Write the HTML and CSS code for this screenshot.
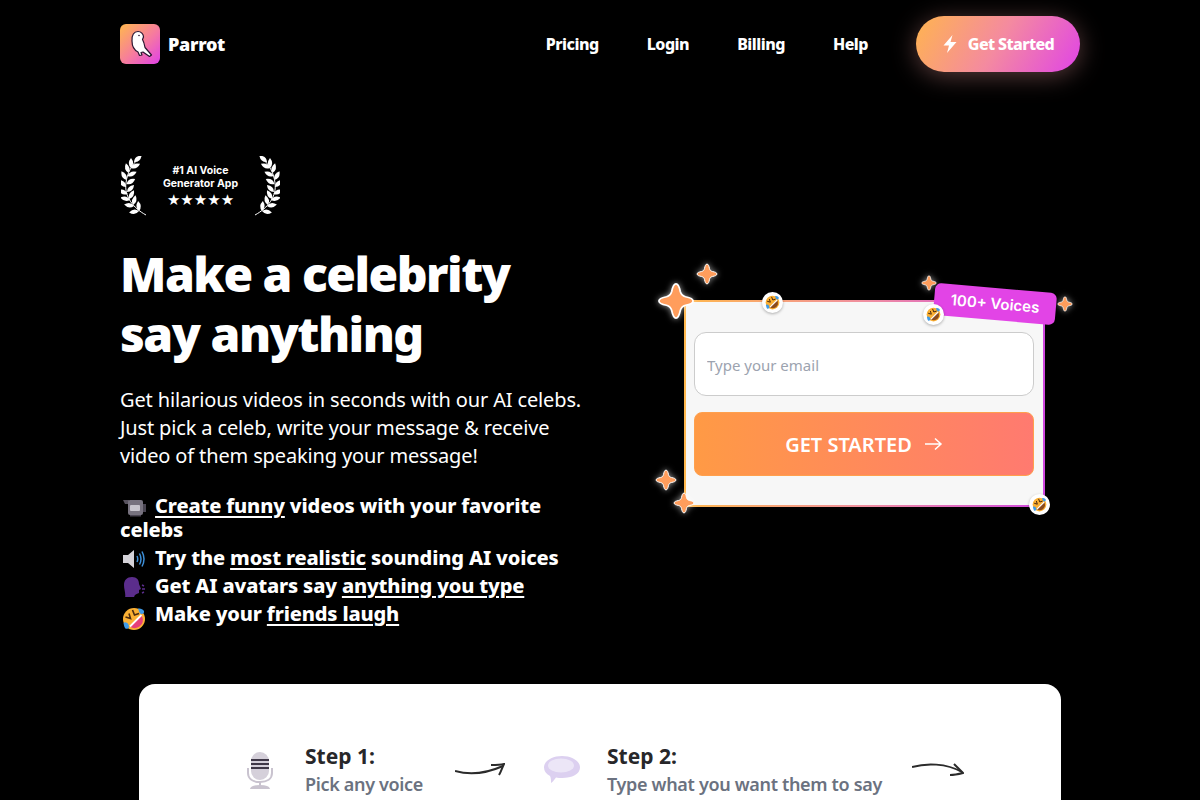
FILE: index.html
```html
<!DOCTYPE html>
<html lang="en">
<head>
    <meta charset="UTF-8">
    <meta name="viewport" content="width=device-width, initial-scale=1.0">
    <title>Parrot</title>
    <link rel="stylesheet" href="styles.css">
</head>
<body>
    <svg class="defs" width="0" height="0">
        <defs>
            <path id="leaf" d="M0 0 Q4.500 -4.400 10 0 Q4.500 4.400 0 0Z"/>
            <symbol id="laurel" viewBox="0 0 26 60">
                <path d="M25 59 C12 52 3 40 5 27 C6 17 11 9 17 3" fill="none" stroke="#fff" stroke-width="1"/>
                <g fill="#fff">
                    <use href="#leaf" transform="translate(18 55) rotate(172)"/>
                    <use href="#leaf" transform="translate(13 50) rotate(188)"/>
                    <use href="#leaf" transform="translate(9 44) rotate(195)"/>
                    <use href="#leaf" transform="translate(6.500 38) rotate(205)"/>
                    <use href="#leaf" transform="translate(5 31) rotate(225)"/>
                    <use href="#leaf" transform="translate(5.500 24) rotate(240)"/>
                    <use href="#leaf" transform="translate(7.500 17) rotate(255)"/>
                    <use href="#leaf" transform="translate(10 12) rotate(270)"/>
                    <use href="#leaf" transform="translate(18 55) rotate(-95)"/>
                    <use href="#leaf" transform="translate(12 49) rotate(-75)"/>
                    <use href="#leaf" transform="translate(8 43) rotate(-60)"/>
                    <use href="#leaf" transform="translate(6 36) rotate(-45)"/>
                    <use href="#leaf" transform="translate(5.500 28) rotate(-30)"/>
                    <use href="#leaf" transform="translate(6.500 20) rotate(-25)"/>
                    <use href="#leaf" transform="translate(10 12) rotate(-25)"/>
                    <use href="#leaf" transform="translate(13 6) rotate(-40)"/>
                </g>
            </symbol>
            <symbol id="sparkle" viewBox="0 0 40 40">
                <path d="M20 2 C22.500 2 23.500 5 24.500 10 C25.500 13.500 26.500 14.500 30 15.500 C35 16.500 38 17.500 38 20 C38 22.500 35 23.500 30 24.500 C26.500 25.500 25.500 26.500 24.500 30 C23.500 35 22.500 38 20 38 C17.500 38 16.500 35 15.500 30 C14.500 26.500 13.500 25.500 10 24.500 C5 23.500 2 22.500 2 20 C2 17.500 5 16.500 10 15.500 C13.500 14.500 14.500 13.500 15.500 10 C16.500 5 17.500 2 20 2Z" fill="#ff9d5c" stroke="#fff" stroke-width="1.800"/>
            </symbol>
            <symbol id="rofl" viewBox="0 0 24 24">
                <circle cx="12" cy="12" r="11" fill="#fbb034"/>
                <path d="M8 19.500 L19.500 8 Q23 15.500 17.500 19.500 Q12 23 8 19.500Z" fill="currentColor"/>
                <path d="M8 19.500 L19.500 8" fill="none" stroke="#fff" stroke-width="1.800"/>
                <path d="M3.500 10 L8.500 11.500 L7 6.500" fill="none" stroke="#4a2a10" stroke-width="1.600"/>
                <path d="M10.500 3 L12.500 8 L17 6.500" fill="none" stroke="#4a2a10" stroke-width="1.600"/>
                <path d="M1.500 16 C4 14 7 17 7 19.500 C7 22 4 22.500 3 21 C2 19.500 2 18 1.500 16Z" fill="#3f9be8"/>
                <path d="M16 1.500 C18 1.500 21 2 22 4 C22.500 6 21 7.500 19 7 C17 6 17 3.500 16 1.500Z" fill="#3f9be8"/>
            </symbol>
        </defs>
    </svg>

    <div class="wrap">
        <header class="top">
            <a class="brand">
                <span class="brand_logo">
                    <svg width="40" height="40" viewBox="0 0 40 40">
                        <path d="M12 17 C11.500 11 14 7.500 18 7.500 C21 7.500 23.500 10 23.500 13 L22.500 15.500 C24 18 24.500 21 25 23.500 L31.500 31 L29.500 32.500 L23 28 L21 28.500 L22 31 L19.500 31.500 L18 28 C14 26 12 22 12 17Z" fill="#fff" stroke="#2a1430" stroke-width="1.200" stroke-linejoin="round"/>
                        <circle cx="19" cy="11.500" r="0.800" fill="#2a1430"/>
                    </svg>
                </span>
                <span class="brand_name">Parrot</span>
            </a>
            <nav class="menu">
                <a>Pricing</a>
                <a>Login</a>
                <a>Billing</a>
                <a>Help</a>
                <a class="menu_btn">
                    <svg width="16" height="20" viewBox="0 0 16 20"><path d="M10.500 1 L1.500 11.500 L7 11.500 L5 19 L14.500 8 L8.500 8Z" fill="#fff"/></svg>
                    Get Started
                </a>
            </nav>
        </header>

        <section class="hero">
            <div class="hero_left">
                <div class="award">
                    <svg class="laurel" width="26" height="60"><use href="#laurel"/></svg>
                    <div class="award_text">
                        <p>#1 AI Voice<br>Generator App</p>
                        <p class="stars">★★★★★</p>
                    </div>
                    <svg class="laurel flip" width="26" height="60"><use href="#laurel"/></svg>
                </div>

                <h1>Make a celebrity<br>say anything</h1>

                <p class="lead">Get hilarious videos in seconds with our AI celebs. Just pick a celeb, write your message &amp; receive video of them speaking your message!</p>

                <ul class="points">
                    <li>
                        <svg class="emoji" width="26" height="20" viewBox="0 0 26 20">
                            <path d="M3 3 L9 3 L9 7 L5 7Z" fill="#57525e"/>
                            <rect x="8" y="3" width="15" height="15" rx="2" fill="#77727f"/>
                            <rect x="10" y="8" width="10" height="6" rx="1" fill="#c8c5ce"/>
                            <rect x="23" y="7" width="3" height="8" fill="#4a4552"/>
                            <rect x="10" y="18" width="11" height="1.500" fill="#4a4552"/>
                        </svg>
                        <u>Create funny</u> videos with your favorite celebs
                    </li>
                    <li>
                        <svg class="emoji" width="26" height="20" viewBox="0 0 26 20">
                            <path d="M3 6 L8 6 L14 1 L14 19 L8 14 L3 14Z" fill="#d4d2d8"/>
                            <path d="M17 7 Q18.500 10 17 13 M19.500 4.500 Q22.500 10 19.500 15.500 M22 2.500 Q26 10 22 17.500" fill="none" stroke="#3d8fd8" stroke-width="1.500"/>
                        </svg>
                        Try the <u>most realistic</u> sounding AI voices
                    </li>
                    <li>
                        <svg class="emoji" width="26" height="20" viewBox="0 0 26 20">
                            <path d="M4 8 C4 3 7 0 12 0 C17 0 19 3 19 7 L21 12 L19 13 L19 16 C16 17 14 18 14 21 L5 21 C6 16 4 13 4 8Z" fill="#5b2d8c"/>
                            <path d="M22 8 L24 9 M22 12 L25 12 M22 16 L24 15" stroke="#5b2d8c" stroke-width="1.500"/>
                        </svg>
                        Get AI avatars say <u>anything you type</u>
                    </li>
                    <li>
                        <svg class="emoji emoji_big" width="24" height="24"><use href="#rofl"/></svg>
                        Make your <u>friends laugh</u>
                    </li>
                </ul>
            </div>

            <div class="form_card">
                <svg class="spark spark1" width="38" height="38"><use href="#sparkle"/></svg>
                <svg class="spark spark2" width="22" height="22"><use href="#sparkle"/></svg>
                <svg class="spark spark3" width="22" height="22"><use href="#sparkle"/></svg>
                <svg class="spark spark4" width="22" height="22"><use href="#sparkle"/></svg>
                <svg class="spark spark5" width="16" height="16"><use href="#sparkle"/></svg>
                <svg class="spark spark6" width="16" height="16"><use href="#sparkle"/></svg>
                <span class="bubble bubble1"><svg width="15" height="15"><use href="#rofl"/></svg></span>
                <span class="bubble bubble2"><svg width="15" height="15"><use href="#rofl"/></svg></span>
                <span class="bubble bubble3"><svg width="15" height="15"><use href="#rofl"/></svg></span>
                <span class="badge">100+ Voices</span>

                <input class="email" type="text" placeholder="Type your email">
                <button class="go">
                    GET STARTED
                    <svg width="20" height="16" viewBox="0 0 20 16"><path d="M2 8 L18 8 M12 2.500 L18 8 L12 13.500" fill="none" stroke="#fff" stroke-width="1.500"/></svg>
                </button>
            </div>
        </section>
    </div>

    <section class="steps">
        <div class="steps_row">
            <svg class="step_icon" width="26" height="37" viewBox="0 0 26 37">
                <path d="M1 16 L1 21 C1 27 6 30 13 30 C20 30 25 27 25 21 L25 16" fill="none" stroke="#c9c3cf" stroke-width="2"/>
                <rect x="4" y="0" width="18" height="28" rx="9" fill="#d5d0da"/>
                <path d="M4 8 H22 M4 12 H22 M4 16 H22" stroke="#3f3848" stroke-width="2"/>
                <path d="M13 30 V33 M4 37 C5 33 21 33 22 37Z" fill="#c9c3cf" stroke="#c9c3cf" stroke-width="2"/>
            </svg>
            <div class="step">
                <b>Step 1:</b>
                <span>Pick any voice</span>
            </div>
            <svg class="arrow" width="50" height="14" viewBox="0 0 50 14">
                <path d="M0 8 C14 12 30 11 48 3" fill="none" stroke="#2b2b2b" stroke-width="2"/>
                <path d="M36 2 C40 2 45 2 49 1 C47 5 46 9 44 12" fill="none" stroke="#2b2b2b" stroke-width="2"/>
            </svg>
            <svg class="step_icon bubble_icon" width="36" height="28" viewBox="0 0 36 28">
                <path d="M18 0 C28 0 36 5 36 11.500 C36 18 28 22 18 22 C16 22 14 22 12 21.500 C10 24 9 26 7 27 C7 24 7 22 6 20 C2 18 0 15 0 11.500 C0 5 8 0 18 0Z" fill="#dcd0f0"/>
                <ellipse cx="17" cy="9.500" rx="13" ry="7" fill="#ece6f7"/>
            </svg>
            <div class="step">
                <b>Step 2:</b>
                <span>Type what you want them to say</span>
            </div>
            <svg class="arrow arrow_two" width="52" height="14" viewBox="0 0 52 14">
                <path d="M0 4 C14 0 34 0 50 9" fill="none" stroke="#2b2b2b" stroke-width="2"/>
                <path d="M42 1 C45 4 48 7 51 10 C47 11 42 12 38 12" fill="none" stroke="#2b2b2b" stroke-width="2"/>
            </svg>
        </div>
    </section>
</body>
</html>
```

FILE: styles.css
```css
*{
    box-sizing: border-box;
}

body{
    margin: 0;
    background: #000;
    color: #fff;
    font-family: "Noto Sans", "Open Sans", sans-serif;
}

.defs{
    position: absolute;
}

.wrap{
    width: 960px;
    margin: 0 auto;
}

/* header */
.top{
    display: flex;
    justify-content: space-between;
    align-items: center;
    height: 88px;
}

.brand{
    display: flex;
    align-items: center;
    gap: 8px;
}

.brand_logo{
    display: block;
    width: 40px;
    height: 40px;
    border-radius: 6px;
    background: linear-gradient(135deg, #ffb84d, #f67aa0 55%, #e040e8);
}

.brand_name{
    font-size: 18px;
    font-weight: 900;
    letter-spacing: -.3px;
}

.menu{
    display: flex;
    align-items: center;
    gap: 48px;
    font-size: 16px;
    font-weight: 800;
    letter-spacing: -.5px;
}

.menu_btn{
    display: flex;
    align-items: center;
    justify-content: center;
    gap: 10px;
    width: 164px;
    height: 56px;
    border-radius: 28px;
    background: linear-gradient(120deg, #ffb44f, #f48aa0 50%, #e044e6);
    box-shadow: 0 4px 24px rgba(255, 170, 170, .35);
    letter-spacing: -.6px;
}

/* hero */
.hero{
    display: flex;
    justify-content: space-between;
    padding: 67px 35px 0 0;
    height: 596px;
}

.hero_left{
    width: 470px;
}

.award{
    display: flex;
    justify-content: space-between;
    align-items: center;
    width: 159px;
    height: 61px;
    margin-left: 1px;
}

.award_text{
    text-align: center;
    font-family: "Inter", "Liberation Sans", sans-serif;
    font-size: 10.500px;
    font-weight: 700;
    line-height: 13px;
}

.award_text p{
    margin: 0;
}

.award_text .stars{
    margin-top: 2px;
    font-family: "DejaVu Sans", sans-serif;
    font-size: 15px;
    line-height: 16px;
    letter-spacing: 0;
}

.flip{
    transform: scaleX(-1);
}

h1{
    margin: 28px 0 0;
    font-size: 48px;
    font-weight: 900;
    line-height: 60px;
    letter-spacing: -1.500px;
}

.lead{
    margin: 22px 0 0;
    font-size: 20px;
    line-height: 28px;
    letter-spacing: -.14px;
}

.points{
    list-style: none;
    margin: 24px 0 0;
    padding: 0;
    font-size: 20px;
    font-weight: 800;
    line-height: 24px;
    letter-spacing: -.15px;
}

.points li{
    margin-bottom: 4px;
}

.points u{
    text-underline-offset: 3px;
    text-decoration-thickness: 2px;
}

.emoji{
    vertical-align: -4px;
    margin-right: 4px;
    color: #e6407a;
}

.emoji_big{
    vertical-align: -6px;
    margin: -4px 4px -4px 2px;
}

/* form card */
.form_card{
    position: relative;
    display: flex;
    flex-direction: column;
    gap: 16px;
    align-self: flex-start;
    width: 361px;
    height: 207px;
    margin-top: 145px;
    padding: 30px 9px 0 8px;
    border: 2px solid transparent;
    background: linear-gradient(#f7f7f7, #f7f7f7) padding-box,
                linear-gradient(90deg, #ffb84d, #f08fa0 50%, #d048e0) border-box;
}

.email{
    width: 100%;
    height: 64px;
    padding: 2px 12px 0;
    border: 1px solid #ccc;
    border-radius: 12px;
    background: #fff;
    font-family: inherit;
    font-size: 15px;
}

.email::placeholder{
    color: #9ca3af;
}

.go{
    display: flex;
    align-items: center;
    justify-content: center;
    gap: 11px;
    width: 100%;
    height: 64px;
    border: 1px solid #ffa04d;
    border-radius: 8px;
    background: linear-gradient(90deg, #ff9a45, #ff7a70);
    color: #fff;
    font-family: inherit;
    font-size: 20px;
    font-weight: 600;
}

.spark{
    position: absolute;
    filter: drop-shadow(0 0 3px rgba(255, 255, 255, .6));
}

.spark1{ left: -29px; top: -20px; }
.spark2{ left: 10px; top: -39px; }
.spark3{ left: -31px; top: 167px; }
.spark4{ left: -13px; top: 190px; }
.spark5{ left: 235px; top: -27px; }
.spark6{ left: 371px; top: -6px; }

.bubble{
    position: absolute;
    display: flex;
    align-items: center;
    justify-content: center;
    width: 21px;
    height: 21px;
    border-radius: 50%;
    background: #fff;
    box-shadow: 0 1px 3px rgba(0, 0, 0, .3);
    color: #8a4b1f;
}

.bubble1{ left: 76px; top: -10px; }
.bubble2{ left: 237px; top: 2px; z-index: 2; }
.bubble3{ left: 343px; top: 192px; }

.badge{
    position: absolute;
    left: 248px;
    top: -14px;
    width: 122px;
    height: 32px;
    border-radius: 6px;
    background: #e244e6;
    font-family: "Inter", "Liberation Sans", sans-serif;
    font-size: 15px;
    font-weight: 600;
    line-height: 32px;
    text-align: center;
    transform: rotate(5deg);
}

/* steps */
.steps{
    width: 922px;
    height: 220px;
    margin: 0 auto;
    padding: 58px 0 0 108px;
    border-radius: 16px;
    background: #fff;
}

.steps_row{
    display: flex;
    align-items: flex-start;
}

.step_icon{
    flex: none;
    margin: 10px 32px 0 0;
}

.bubble_icon{
    margin: 14px 27px 0 39px;
}

.step{
    display: flex;
    flex-direction: column;
}

.step b{
    color: #27272a;
    font-size: 21px;
    font-weight: 700;
    line-height: 28px;
}

.step span{
    color: #6b7280;
    font-size: 18px;
    font-weight: 600;
    line-height: 28px;
    letter-spacing: -.33px;
}

.arrow{
    flex: none;
    margin: 21px 0 0 32px;
}

.arrow_two{
    margin-left: 30px;
}
```
